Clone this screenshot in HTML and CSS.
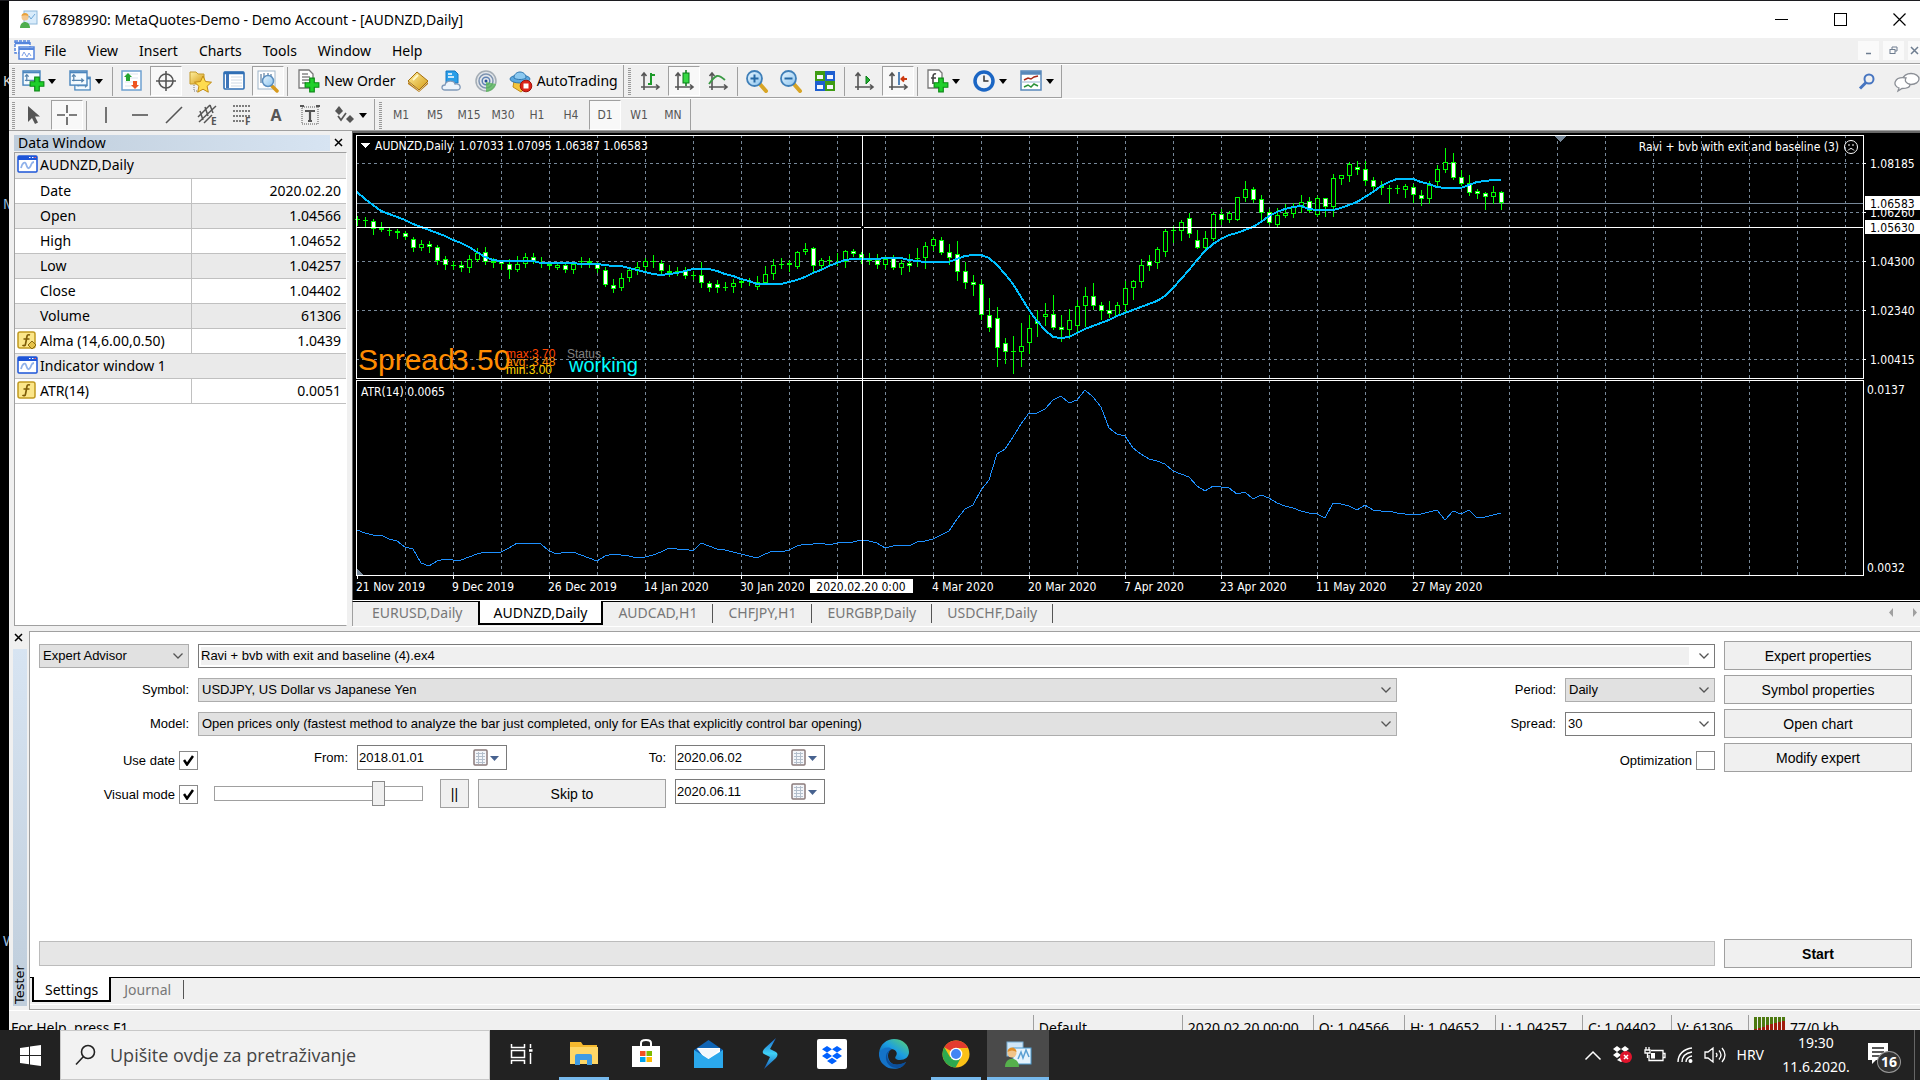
FILE: index.html
```html
<!DOCTYPE html>
<html lang="en">
<head>
<meta charset="utf-8">
<title>67898990: MetaQuotes-Demo - Demo Account - [AUDNZD,Daily]</title>
<link rel="stylesheet" href="styles.css">
</head>
<body>
<svg class="defs" aria-hidden="true">
  <defs>
    <linearGradient id="gold" x1="0" y1="0" x2="1" y2="1"><stop offset="0" stop-color="#fff0a0"/><stop offset="1" stop-color="#d49a12"/></linearGradient>
    <linearGradient id="lens" x1="0" y1="0" x2="1" y2="1"><stop offset="0" stop-color="#e8f6ff"/><stop offset="1" stop-color="#8cc4ee"/></linearGradient>
    <linearGradient id="edge" x1="0" y1="1" x2="1" y2="0"><stop offset="0" stop-color="#0c59a4"/><stop offset=".5" stop-color="#1b9de2"/><stop offset="1" stop-color="#5fd66b"/></linearGradient>
    <linearGradient id="bolt" x1="0" y1="1" x2="0" y2="0"><stop offset="0" stop-color="#1457b8"/><stop offset=".5" stop-color="#3fd0f5"/><stop offset="1" stop-color="#1a6ad0"/></linearGradient>
    <symbol id="plus" viewBox="0 0 14 14"><path d="M5 1h4v4h4v4H9v4H5V9H1V5h4z" fill="#1fd02a" stroke="#0a8a14"/></symbol>
    <symbol id="chartwin" viewBox="0 0 20 18"><rect x="1" y="1" width="18" height="15" fill="#f4fbff" stroke="#4a86bd" stroke-width="1.500"/><path d="M1 2.500h18" stroke="#4a86bd" stroke-width="2"/><path d="M5 5v7M3 7l2-2 2 2M3 11h13M13 9l2 2-2 2" fill="none" stroke="#5684ad" stroke-width="1.300"/></symbol>
    <symbol id="axes" viewBox="0 0 24 24"><path d="M6 4v17M3 18h18M3.500 7L6 4l2.500 3M18 15.500l3 2.500-3 2.500" fill="none" stroke="#555" stroke-width="1.600"/></symbol>
    <symbol id="datawin" viewBox="0 0 21 18"><rect x="1" y="1" width="19" height="16" rx="1" fill="#fff" stroke="#1d55d8" stroke-width="1.500"/><path d="M1 3h19" stroke="#1d55d8" stroke-width="4"/><path d="M12 2.500h1.500M15 2.500h1.500" stroke="#fff"/><path d="M17.500 2.500H19" stroke="#f55"/><path d="M4 13c1-5 4-7 5-4s2 6 4 3 1-5 4-5" fill="none" stroke="#8fb1ea" stroke-width="1.800"/></symbol>
    <symbol id="func" viewBox="0 0 20 19"><rect x="1" y="1" width="17" height="16" rx="2" fill="#fbe68a" stroke="#c19a21" stroke-width="1.500"/><path d="M13 4c-3-1-3 1-3.500 4L8.500 13c0 2-2 2-3 1M6.500 8h6" fill="none" stroke="#7d5c08" stroke-width="1.700"/></symbol>
    <symbol id="cal" viewBox="0 0 28 20"><rect x="1" y="2" width="13" height="15" rx="1" fill="#f4f6fa" stroke="#8a7b7b" stroke-width="1.500"/><path d="M3 5.500h9M3 8.500h9M3 11.500h9M3 14.500h9M5.500 4v12M9.500 4v12" stroke="#b4bfcc"/><path d="M17 8h9l-4.500 5z" fill="#47628f"/></symbol>
    <symbol id="chev" viewBox="0 0 12 8"><path d="M1.500 1.500L6 6l4.500-4.500" fill="none" stroke="#555" stroke-width="1.300"/></symbol>
  </defs>
</svg>

<div class="screen">
  <span class="desk-text dt-1">K</span>
  <span class="desk-text dt-2">M</span>
  <span class="desk-text dt-3">W</span>

  <main class="app">
    <header class="titlebar">
      <svg width="20" height="20" viewBox="0 0 20 20"><rect x="5" y="1" width="13" height="13" fill="#d9ecfb" stroke="#8db8da"/><path d="M7 10l3-4 2 3 4-5" fill="none" stroke="#6fa8d8"/><circle cx="6" cy="7" r="3.500" fill="#f3c78d"/><path d="M2.500 6c0-4 7-4 7 0-2-1-5-1-7 0z" fill="#e8a13b"/><path d="M1 18c0-8 10-8 10 0z" fill="#4eae4e"/></svg>
      <h1>67898990: MetaQuotes-Demo - Demo Account - [AUDNZD,Daily]</h1>
      <div class="win-buttons">
        <button aria-label="Minimize"><svg width="13" height="13"><path d="M0 6.500h13" stroke="#000"/></svg></button>
        <button aria-label="Maximize"><svg width="13" height="13"><rect x=".5" y=".5" width="12" height="12" fill="none" stroke="#000"/></svg></button>
        <button aria-label="Close"><svg width="13" height="13"><path d="M.5.500l12 12M12.500.500l-12 12" stroke="#000" stroke-width="1.200"/></svg></button>
      </div>
    </header>

    <nav class="menubar">
      <svg width="21" height="21" viewBox="0 0 21 21"><rect x="1" y="1" width="15" height="12" fill="#fff" stroke="#5585dd" stroke-width="1.500" stroke-dasharray="3 1"/><path d="M1 3h15" stroke="#5585dd" stroke-width="2.500"/><rect x="5" y="7" width="15" height="12" fill="#fff" stroke="#5585dd" stroke-width="1.500"/><path d="M5 9h15" stroke="#5585dd" stroke-width="2"/><path d="M8 16l2-4 3 5 2-4 2 3" fill="none" stroke="#7fa2e6"/></svg>
      <a href="#">File</a><a href="#">View</a><a href="#">Insert</a><a href="#">Charts</a><a href="#">Tools</a><a href="#">Window</a><a href="#">Help</a>
      <div class="mdi-buttons">
        <button aria-label="Minimize chart"><svg width="9" height="9"><path d="M2 7.500h5" stroke="#6e7d90" stroke-width="1.500"/></svg></button>
        <button aria-label="Restore chart"><svg width="9" height="9"><path d="M3 3V1h5v4H6" fill="none" stroke="#6e7d90"/><rect x="1" y="3.500" width="5" height="4" fill="none" stroke="#6e7d90"/></svg></button>
        <button aria-label="Close chart"><svg width="9" height="9"><path d="M1 1l7 7M8 1L1 8" stroke="#6e7d90" stroke-width="1.500"/></svg></button>
      </div>
    </nav>

    <div class="toolbar">
      <div class="tool-group">
        <i class="grip"></i>
        <button class="tb drop" aria-label="New chart"><svg width="24" height="24"><use href="#chartwin" x="1" y="1" width="19" height="17"/><use href="#plus" x="8" y="7" width="16" height="16"/></svg><i class="caret"></i></button>
        <button class="tb drop" aria-label="Profiles"><svg width="24" height="24"><use href="#chartwin" x="6" y="7" width="17" height="16"/><use href="#chartwin" x="1" y="1" width="19" height="17"/></svg><i class="caret"></i></button>
        <i class="sep"></i>
        <button class="tb" aria-label="Market Watch"><svg width="24" height="24"><rect x="2" y="2" width="19" height="19" fill="#fff" stroke="#6ea0d0" stroke-width="1.500"/><path d="M5 5h13M5 9h13M5 13h13M5 17h13" stroke="#dbe5ee"/><path d="M8 4l4 4h-2v4H6V8H4z" fill="#23a52e"/><path d="M15 20l4-4h-2v-4h-4v4h-2z" fill="#ee5420"/></svg></button>
        <button class="tb on" aria-label="Navigator target"><svg width="24" height="24" fill="none" stroke="#555" stroke-width="1.600"><circle cx="12" cy="12" r="7"/><path d="M12 2v20M2 12h20"/></svg></button>
        <button class="tb" aria-label="Navigator"><svg width="24" height="24"><path d="M2 3h6l2 2h6v10H2z" fill="url(#gold)" stroke="#c49a2c"/><path d="M6 16v6h5" stroke="#777" stroke-dasharray="1 1" fill="none"/><path d="M15 7l2.500 5.500 6 .7-4.400 4 1.200 6L15 20.200 9.700 23.200l1.200-6-4.400-4 6-.7z" fill="#ffdc4e" stroke="#c08a14"/></svg></button>
        <button class="tb" aria-label="Terminal"><svg width="24" height="24"><rect x="2" y="3" width="20" height="17" rx="1" fill="#fff" stroke="#2f6fb5" stroke-width="1.600"/><path d="M2 4h20" stroke="#2f6fb5" stroke-width="2.500"/><path d="M4 5h3v14H4z" fill="#3d74b8"/><path d="M9 8h11M9 11h11M9 14h11M9 17h11" stroke="#cfd9e4"/></svg></button>
        <button class="tb on" aria-label="Strategy Tester"><svg width="24" height="24"><rect x="2" y="2" width="17" height="18" fill="#fff" stroke="#9db4c8"/><path d="M5 5v9M8 4v10M12 4v10M15 5v9" stroke="#7c98b4" stroke-width="1.500"/><path d="M16 17l5 5" stroke="#d79a1e" stroke-width="3.500" stroke-linecap="round"/><circle cx="12" cy="12" r="5.500" fill="url(#lens)" stroke="#5b8fc0" stroke-width="1.500"/></svg></button>
        <i class="sep"></i>
        <button class="tb wide"><svg width="24" height="24"><path d="M3 1h10l4 4v14H3z" fill="#fff" stroke="#777" stroke-width="1.300"/><path d="M6 5h6M6 8h8M6 11h8M6 14h4" stroke="#888" stroke-width="1.500"/><use href="#plus" x="8" y="8" width="16" height="16"/></svg>New Order</button>
        <button class="tb" aria-label="MetaEditor"><svg width="24" height="24"><path d="M2 12L11 3l11 9-9 9z" fill="url(#gold)" stroke="#a56f0c"/><path d="M2 13l11 9 9-9v2l-9 8L2 15z" fill="#b97d12"/><path d="M7 11l5-5" stroke="#fff7c8" stroke-width="2"/></svg></button>
        <button class="tb" aria-label="Cloud"><svg width="24" height="24"><path d="M6 2h9l3 3v9H6z" fill="#2a9ee8" stroke="#1579c4"/><path d="M8 5h4M8 8h6" stroke="#fff" stroke-width="1.500"/><path d="M5 21c-4 0-4-5 0-5 1-5 9-5 10-1 6-1 7 6 2 6z" fill="#eef4fb" stroke="#8099b8" stroke-width="1.300"/></svg></button>
        <button class="tb" aria-label="Signals"><svg width="24" height="24" fill="none"><circle cx="12" cy="12" r="10" fill="#e3e6ea" stroke="#a4adb5" stroke-width="1.500"/><circle cx="12" cy="12" r="7" stroke="#7d93b0" stroke-width="1.500"/><circle cx="12" cy="12" r="3.800" stroke="#5e82b4" stroke-width="1.500"/><circle cx="12" cy="12" r="1.500" fill="#234f96"/><path d="M12 13v10c5 0 9-4 10-8z" fill="#59b559" opacity=".8"/></svg></button>
        <button class="tb wide"><svg width="24" height="24"><path d="M5 12l-1 6 8 5 6-5V12z" fill="#f4c53c" stroke="#c48b16"/><ellipse cx="11" cy="10" rx="10" ry="4" fill="#5ba8df" stroke="#2f77b0"/><path d="M5 9c0-8 12-8 12 0-3 2-9 2-12 0z" fill="#8cc9f0" stroke="#2f77b0"/><circle cx="17" cy="17" r="5.800" fill="#dc2318" stroke="#a01008"/><rect x="14.500" y="14.500" width="5" height="5" fill="#fff"/></svg>AutoTrading</button>
      </div>
      <div class="tool-group">
        <i class="grip"></i>
        <button class="tb" aria-label="Bar chart"><svg width="24" height="24"><use href="#axes"/><path d="M13 4v12M13 6h4M10 15h3" stroke="#1c9a2a" stroke-width="2"/></svg></button>
        <button class="tb on" aria-label="Candlesticks"><svg width="24" height="24"><use href="#axes"/><path d="M14 1v16" stroke="#087a18" stroke-width="1.500"/><rect x="11" y="4" width="6" height="10" fill="#35d943" stroke="#087a18"/></svg></button>
        <button class="tb" aria-label="Line chart"><svg width="24" height="24"><use href="#axes"/><path d="M3 15c7-10 9-10 16-4" fill="none" stroke="#3a9a44" stroke-width="1.800"/></svg></button>
        <i class="sep"></i>
        <button class="tb" aria-label="Zoom in"><svg width="24" height="24"><path d="M14 14l7 8" stroke="#d8a526" stroke-width="4" stroke-linecap="round"/><circle cx="9.500" cy="9.500" r="7.500" fill="url(#lens)" stroke="#3f7fb8" stroke-width="1.800"/><path d="M5.500 9.500h8M9.500 5.500v8" stroke="#2669a5" stroke-width="2"/></svg></button>
        <button class="tb" aria-label="Zoom out"><svg width="24" height="24"><path d="M14 14l7 8" stroke="#d8a526" stroke-width="4" stroke-linecap="round"/><circle cx="9.500" cy="9.500" r="7.500" fill="url(#lens)" stroke="#3f7fb8" stroke-width="1.800"/><path d="M5.500 9.500h8" stroke="#2669a5" stroke-width="2"/></svg></button>
        <button class="tb" aria-label="Tile windows"><svg width="24" height="24"><path d="M2 2h10v10H2zM12 12h10v10H12z" fill="#3f9c14"/><path d="M12 2h10v10H12zM2 12h10v10H2z" fill="#1f5fd0"/><path d="M4 6h6v4H4zM14 6h6v4h-6zM4 16h6v4H4zM14 16h6v4h-6z" fill="#f4f8ff"/></svg></button>
        <i class="sep"></i>
        <button class="tb" aria-label="Auto scroll"><svg width="24" height="24"><use href="#axes"/><path d="M14 7l4 4-4 4z" fill="#22b030" stroke="#0b7d18"/></svg></button>
        <button class="tb on" aria-label="Chart shift"><svg width="24" height="24"><use href="#axes"/><path d="M13 3v13" stroke="#2c68a8" stroke-width="1.600"/><path d="M15 10h6M18 7.500L15.500 10l2.500 2.500" fill="none" stroke="#cc3a10" stroke-width="2"/></svg></button>
        <i class="sep"></i>
        <button class="tb drop" aria-label="Indicators"><svg width="24" height="24"><path d="M3 1h11l3 3v15H3z" fill="#fff" stroke="#777" stroke-width="1.300"/><path d="M11 5c-3-1-3 2-3 4v6M6 9h5" fill="none" stroke="#444" stroke-width="1.600"/><use href="#plus" x="8" y="8" width="16" height="16"/></svg><i class="caret"></i></button>
        <button class="tb drop" aria-label="Periods"><svg width="24" height="24"><circle cx="12" cy="12" r="9" fill="#f2f5f8" stroke="#1b66c4" stroke-width="3.500"/><path d="M12 6.500V12h4.500" fill="none" stroke="#333" stroke-width="1.500"/></svg><i class="caret"></i></button>
        <button class="tb drop" aria-label="Templates"><svg width="24" height="24"><rect x="2" y="2" width="20" height="19" fill="#fff" stroke="#5888ba" stroke-width="1.500"/><path d="M2 4h20" stroke="#5888ba" stroke-width="3.500"/><path d="M2 13h20" stroke="#9ab5d0"/><path d="M5 11l4-2 3 1 3-2 4-1" fill="none" stroke="#a82818" stroke-width="1.500"/><path d="M5 18l4-2 3 2 3-3 4 2" fill="none" stroke="#2b9237" stroke-width="1.500"/></svg><i class="caret"></i></button>
      </div>
      <div class="tool-right">
        <button class="tb" aria-label="Search"><svg width="20" height="20" fill="none" stroke="#4775c0"><circle cx="12" cy="7" r="4.500" stroke-width="2"/><path d="M9 10.500L3 16.500" stroke-width="3"/></svg></button>
        <button class="tb" aria-label="Chat"><svg width="26" height="22" fill="#fff" stroke="#8b8f96" stroke-width="1.300"><ellipse cx="17" cy="8" rx="8" ry="5.500"/><path d="M12 7c-12-2-14 8-7 10l-1 3 4-2.500c5 0 8-1 8-4-3-1-6-3-4-6.500z"/></svg></button>
      </div>
    </div>

    <div class="toolbar second">
      <div class="tool-group">
        <i class="grip"></i>
        <button class="tb" aria-label="Cursor"><svg width="24" height="24"><path d="M7 3v16l4-4 3 6 3-1.500-3-6h5z" fill="#555"/></svg></button>
        <button class="tb on" aria-label="Crosshair"><svg width="24" height="24" stroke="#555" stroke-width="1.600"><path d="M12 2v8M12 14v8M2 12h8M14 12h8"/></svg></button>
        <i class="sep"></i>
        <button class="tb" aria-label="Vertical line"><svg width="24" height="24" stroke="#555" stroke-width="1.600"><path d="M12 4v16"/></svg></button>
        <button class="tb" aria-label="Horizontal line"><svg width="24" height="24" stroke="#555" stroke-width="1.600"><path d="M4 12h16"/></svg></button>
        <button class="tb" aria-label="Trendline"><svg width="24" height="24" stroke="#555" stroke-width="1.600"><path d="M4 20L20 4"/></svg></button>
        <button class="tb glyph" aria-label="Channel"><svg width="24" height="24" stroke="#555" stroke-width="1.500" fill="none"><path d="M2 14L14 2M3 19L20 3M8 20l8-8M4 8l3 9M9 4l3 9M14 2l3 8"/><text x="15" y="22" class="tiny">E</text></svg></button>
        <button class="tb glyph" aria-label="Fibonacci"><svg width="24" height="24" stroke="#555" stroke-width="1.500" stroke-dasharray="2 1" fill="none"><path d="M3 3h17M3 8h17M3 13h17M3 18h11"/><text x="15" y="22" class="tiny">F</text></svg></button>
        <button class="tb glyph">A</button>
        <button class="tb" aria-label="Text label"><svg width="24" height="24"><rect x="4" y="4" width="16" height="17" fill="none" stroke="#555" stroke-dasharray="1 1"/><path d="M2 3h4M18 3h4" stroke="#555" stroke-width="2"/><path d="M7 8h10M12 8v10M10 18h4" stroke="#555" stroke-width="2.200"/></svg></button>
        <button class="tb drop" aria-label="Arrows"><svg width="24" height="24"><path d="M7 3l4 5-4 4-4-4z" fill="#555"/><path d="M18 12l4 4-4 4-4-4z" fill="#555"/><path d="M6 13l3 4 5-7" fill="none" stroke="#555" stroke-width="1.700"/></svg><i class="caret"></i></button>
      </div>
      <div class="tool-group frames">
        <i class="grip"></i>
        <button class="tb">M1</button><button class="tb">M5</button><button class="tb">M15</button><button class="tb">M30</button><button class="tb">H1</button><button class="tb">H4</button><button class="tb on">D1</button><button class="tb">W1</button><button class="tb">MN</button>
      </div>
    </div>

    <div class="workspace">
      <aside class="data-window">
        <div class="dw-head"><h2>Data Window</h2><button aria-label="Close Data Window"><svg width="9" height="9"><path d="M1 1l7 7M8 1L1 8" stroke="#000" stroke-width="1.500"/></svg></button></div>
        <div class="dw-body">
          <table>
            <colgroup><col class="col-name"><col></colgroup>
            <tr class="head"><th colspan="2"><svg width="21" height="18"><use href="#datawin"/></svg>AUDNZD,Daily</th></tr>
            <tr><th>Date</th><td>2020.02.20</td></tr>
            <tr class="alt"><th>Open</th><td>1.04566</td></tr>
            <tr><th>High</th><td>1.04652</td></tr>
            <tr class="alt"><th>Low</th><td>1.04257</td></tr>
            <tr><th>Close</th><td>1.04402</td></tr>
            <tr class="alt"><th>Volume</th><td>61306</td></tr>
            <tr><th><svg width="21" height="19"><use href="#func" width="20" height="19"/><path d="M15 10l4 4-4 4-4-4z" fill="#e6c34a" stroke="#8d6c10"/></svg>Alma (14,6.00,0.50)</th><td>1.0439</td></tr>
            <tr class="head"><th colspan="2"><svg width="21" height="18"><use href="#datawin"/></svg>Indicator window 1</th></tr>
            <tr><th><svg width="21" height="19"><use href="#func" width="20" height="19"/></svg>ATR(14)</th><td>0.0051</td></tr>
          </table>
        </div>
      </aside>
      <section class="charts">
        <div class="chart" id="chart"></div>
        <nav class="tabs chart-tabs">
          <a href="#">EURUSD,Daily</a><a href="#" class="current">AUDNZD,Daily</a><a href="#">AUDCAD,H1</a><a href="#">CHFJPY,H1</a><a href="#">EURGBP,Daily</a><a href="#">USDCHF,Daily</a>
          <span class="tab-scroll"><svg width="32" height="10"><path d="M5 0v9L1 4.500zM25 0v9l4-4.500z" fill="#a0a0a0"/></svg></span>
        </nav>
      </section>
    </div>

    <section class="tester">
      <div class="tester-side">
        <button aria-label="Close Tester"><svg width="9" height="9"><path d="M1 1l7 7M8 1L1 8" stroke="#000" stroke-width="1.500"/></svg></button>
        <h2>Tester</h2>
      </div>
      <div class="tester-main">
        <form class="settings">
          <div class="fields">
            <div class="row">
              <select class="w150" aria-label="Program type"><option>Expert Advisor</option></select>
              <div class="combo grow shaded"><input type="text" aria-label="Expert" value="Ravi + bvb with exit and baseline (4).ex4"><button type="button" aria-label="Choose expert"><svg width="12" height="8"><use href="#chev"/></svg></button></div>
            </div>
            <div class="row">
              <label class="w150" for="symbol">Symbol:</label>
              <select class="grow" id="symbol"><option>USDJPY, US Dollar vs Japanese Yen</option></select>
              <label class="w150" for="period">Period:</label>
              <select class="w150" id="period"><option>Daily</option></select>
            </div>
            <div class="row">
              <label class="w150" for="model">Model:</label>
              <select class="grow" id="model"><option>Open prices only (fastest method to analyze the bar just completed, only for EAs that explicitly control bar opening)</option></select>
              <label class="w150" for="spread">Spread:</label>
              <div class="combo w150"><input type="text" id="spread" value="30"><button type="button" aria-label="Choose spread"><svg width="12" height="8"><use href="#chev"/></svg></button></div>
            </div>
            <div class="row">
              <label class="check w159">Use date<input type="checkbox" checked></label>
              <label class="w141" for="from">From:</label>
              <div class="date"><input type="text" id="from" value="2018.01.01"><button type="button" aria-label="Open calendar"><svg width="28" height="20"><use href="#cal"/></svg></button></div>
              <label class="w150" for="to">To:</label>
              <div class="date"><input type="text" id="to" value="2020.06.02"><button type="button" aria-label="Open calendar"><svg width="28" height="20"><use href="#cal"/></svg></button></div>
              <label class="check push">Optimization<input type="checkbox"></label>
            </div>
            <div class="row">
              <label class="check w159">Visual mode<input type="checkbox" checked></label>
              <input type="range" class="speed" aria-label="Speed" min="0" max="100" value="81">
              <button type="button" class="btn pause">||</button>
              <button type="button" class="btn">Skip to</button>
              <div class="date"><input type="text" aria-label="Skip to date" value="2020.06.11"><button type="button" aria-label="Open calendar"><svg width="28" height="20"><use href="#cal"/></svg></button></div>
            </div>
          </div>
          <div class="actions">
            <button type="button" class="btn">Expert properties</button>
            <button type="button" class="btn">Symbol properties</button>
            <button type="button" class="btn">Open chart</button>
            <button type="button" class="btn">Modify expert</button>
          </div>
        </form>
        <div class="run">
          <div class="progress" role="progressbar" aria-valuenow="0" aria-label="Test progress"></div>
          <button type="button" class="btn start">Start</button>
        </div>
        <nav class="tabs tester-tabs"><a href="#" class="current">Settings</a><a href="#">Journal</a></nav>
      </div>
    </section>

    <footer class="status">
      <span class="grow">For Help, press F1</span>
      <span class="s-profile">Default</span>
      <span class="s-time">2020.02.20 00:00</span>
      <span class="s-val">O: 1.04566</span>
      <span class="s-val">H: 1.04652</span>
      <span class="s-val">L: 1.04257</span>
      <span class="s-val">C: 1.04402</span>
      <span class="s-val">V: 61306</span>
      <span class="s-net"><svg width="31" height="20"><path d="M1.500 0v20M5.500 0v20M9.500 0v20M13.500 0v20M17.500 0v20M21.500 0v20M25.500 0v20M29.500 0v20" stroke="#4d7a10" stroke-width="3"/><path d="M1.500 12v8M5.500 11v9M9.500 10v10M13.500 8v12M17.500 7v13M21.500 6v14M25.500 5v15M29.500 4v16" stroke="#a01c0c" stroke-width="3"/></svg>77/0 kb</span>
    </footer>
  </main>

  <footer class="taskbar">
    <button class="start-btn" aria-label="Start"><svg width="21" height="21" fill="#fff"><path d="M0 3l9-1.200V10H0zM10 1.600L21 0v10H10zM0 11h9v8.200L0 18zM10 11h11v10l-11-1.600z"/></svg></button>
    <label class="search"><svg width="22" height="22" fill="none" stroke="#222" stroke-width="1.600"><circle cx="13" cy="8" r="6.500"/><path d="M8.500 12.500L1 20.500"/></svg><input type="text" aria-label="Search" placeholder="Upišite ovdje za pretraživanje"></label>
    <div class="apps">
      <button aria-label="Task View"><svg width="24" height="22" fill="none" stroke="#fff" stroke-width="1.500"><path d="M1.500 1v3.500h13V1M1.500 21v-3.500h13V21M20.500 1v4M20.500 10v11"/><rect x="1.500" y="7.500" width="13" height="7"/><path d="M19 7.500h3.500" stroke-width="2.500"/></svg></button>
      <button class="open" aria-label="File Explorer"><svg width="30" height="30"><path d="M1 3h11l2 3h14v18H1z" fill="#f5b82e"/><path d="M1 8h28v17H1z" fill="#ffd766"/><path d="M6 26V17q0-2 2-2h13q2 0 2 2v9h-5v-5h-7v5z" fill="#3f9be3"/></svg></button>
      <button aria-label="Store"><svg width="30" height="32"><path d="M10 8V5q0-3 5-3t5 3v3" fill="none" stroke="#fff" stroke-width="2"/><path d="M1 8h28v21H1z" fill="#fff"/><path d="M9 13h5.500v5H9z" fill="#f25022"/><path d="M15.500 13H21v5h-5.500z" fill="#7fba00"/><path d="M9 19h5.500v5H9z" fill="#00a4ef"/><path d="M15.500 19H21v5h-5.500z" fill="#ffb900"/></svg></button>
      <button aria-label="Mail"><svg width="31" height="30"><path d="M1 11L15.500 1 30 11v6H1z" fill="#0f64b4"/><path d="M4 9h23v9l-11 8z" fill="#fff"/><path d="M1 11l14.500 9L30 11v18H1z" fill="#2ba8ec"/><path d="M4 10h23L15.500 20z" fill="#f3f8fc"/></svg></button>
      <button aria-label="Bolt"><svg width="24" height="32"><path d="M18 0L7 10Q3 14 6 16L12 19 6 31 18 20Q21 16 18 14L12 11z" fill="url(#bolt)"/></svg></button>
      <button aria-label="Dropbox"><svg width="30" height="30"><rect width="30" height="30" rx="2" fill="#fff"/><path d="M10 7l5 3.300-5 3.300-5-3.300zM20 7l5 3.300-5 3.300-5-3.300zM10 13.600l5 3.300-5 3.300-5-3.300zM20 13.600l5 3.300-5 3.300-5-3.300zM15 18.700l5 3.300-5 3.300-5-3.300z" fill="#0061fe"/></svg></button>
      <button aria-label="Edge"><svg width="32" height="32"><path d="M1 15C2 6 9 1 16 1c9 0 15 6 15 13 0 5-4 8-9 8-4 0-6-2-4-4 2-3 0-7-5-7-6 0-11 4-12 9z" fill="url(#edge)"/><path d="M1 15c3-5 9-7 13-4-4 2-5 7-3 11 3 6 11 6 17 2C24 32 12 33 6 27c-4-3-5-8-5-12z" fill="#1473c8"/><path d="M14 11c-5 2-6 8-3 12 4 5 11 4 17 1-4 8-13 7-17 3-5-5-4-14 3-16z" fill="#0b4f9c"/></svg></button>
      <button class="open" aria-label="Chrome"><svg width="28" height="28"><circle cx="14" cy="14" r="13.500" fill="#fbc116"/><path d="M14 14L2.300 7.300A13.500 13.500 0 0 1 25.700 7.300L26 8H14z" fill="#e33b2e"/><path d="M2.300 7.200A13.500 13.500 0 0 0 13.600 27.500L19 17.500 8 17z" fill="#2da94f"/><circle cx="14" cy="14" r="6.300" fill="#fff"/><circle cx="14" cy="14" r="5" fill="#4285f4"/></svg></button>
      <button class="open active" aria-label="MetaTrader"><svg width="28" height="28"><rect x="3" y="2" width="16" height="14" fill="#cfe6f7" stroke="#79add4"/><rect x="9" y="8" width="18" height="16" fill="#e6f3fc" stroke="#4d9bd0"/><path d="M14 19l3-7 2 6 3-8 3 7" fill="none" stroke="#5b9fd2" stroke-width="1.500"/><circle cx="8" cy="13" r="4.500" fill="#f1c48a"/><path d="M3.500 12c0-6 9-6 9 0-3-2-6-2-9 0z" fill="#e08f28"/><path d="M1 27c0-11 14-11 14 0z" fill="#56b04c"/></svg></button>
    </div>
    <div class="tray">
      <button aria-label="Show hidden icons"><svg width="18" height="11" fill="none" stroke="#fff" stroke-width="1.500"><path d="M1.500 9.500L9 2l7.500 7.500"/></svg></button>
      <button aria-label="Dropbox status"><svg width="22" height="20"><path d="M5 1l4 3-4 3-4-3zM13 1l4 3-4 3-4-3zM5 7l4 3-4 3-4-3zM9 12l4 3-4 2-4-2z" fill="#fff"/><circle cx="14" cy="12" r="6" fill="#e0142c"/><path d="M12 10l4 4M16 10l-4 4" stroke="#fff" stroke-width="1.500"/></svg></button>
      <button aria-label="Battery"><svg width="22" height="18" fill="none" stroke="#fff" stroke-width="1.300"><path d="M7 4.500h12v10H5V9M19 7.500h2v4h-2"/><path d="M2 1v3M5 1v3M1 4h5v3H1zM3.500 7v5"/><path d="M7 7h4v5.500H7z" fill="#fff" stroke="none"/></svg></button>
      <button aria-label="Wi-Fi"><svg width="18" height="18" fill="none" stroke="#fff" stroke-width="1.400"><path d="M2 16C2 8 8 3 16 2M6 16c0-6 4-9 10-10M10 16c0-3 2-5 6-6"/><circle cx="14.500" cy="15" r="1.300" fill="#fff"/></svg></button>
      <button aria-label="Volume"><svg width="23" height="20" fill="none" stroke="#fff" stroke-width="1.300"><path d="M1 7h3l5-4v14l-5-4H1zM12 8q2 2 0 4M15 5.500q4 4.500 0 9M18 3q6 7 0 14"/></svg></button>
      <button class="lang">HRV</button>
      <button class="clock"><span>19:30</span><span>11.6.2020.</span></button>
      <button class="note" aria-label="Notifications"><svg width="20" height="22"><path d="M0 0h20v17H8l-4 4v-4H0z" fill="#fff"/><path d="M4 5h12M4 9h12M4 13h8" stroke="#222" stroke-width="1.500"/></svg><b>16</b></button>
    </div>
  </footer>
</div>
<script src="chart.js"></script>
</body>
</html>
```

FILE: styles.css
```css
* { box-sizing: border-box; }

body {
  margin: 0;
  background: #000;
  color: #000;
  font: 14px/20px "Noto Sans", "Open Sans", sans-serif;
}

button, input, select { font: inherit; color: inherit; }
button { border: 0; background: none; padding: 0; }
a { color: inherit; text-decoration: none; }
h1, h2 { margin: 0; font-size: inherit; font-weight: 400; }
svg { display: block; flex: none; }
.defs { position: absolute; width: 0; height: 0; }
.grow { flex: 1; min-width: 0; }

.screen {
  position: relative;
  display: flex;
  flex-direction: column;
  height: 100vh;
  min-height: 900px;
  overflow: hidden;
  border-top: 1px solid #1c1c20;
}
.desk-text { position: absolute; left: 3px; color: #9fc0e0; }
.dt-1 { top: 70px; color: #ddd; }
.dt-2 { top: 193px; }
.dt-3 { top: 930px; }

/* Terminal window */
.app {
  position: relative;
  flex: 1;
  min-height: 0;
  margin-left: 9px;
  display: flex;
  flex-direction: column;
  background: #f0f0f0;
  overflow: hidden;
}

.titlebar {
  flex: none;
  display: flex;
  align-items: center;
  gap: 4px;
  height: 37px;
  padding-left: 10px;
  background: #fff;
}
.titlebar h1 { flex: 1; }
.win-buttons { display: flex; }
.win-buttons button { width: 59px; height: 36px; display: grid; place-items: center; }
.win-buttons button:last-child { width: 42px; margin-left: 8px; }

.menubar {
  flex: none;
  display: flex;
  align-items: center;
  gap: 21px;
  height: 26px;
  padding-left: 5px;
  border-bottom: 1px solid #a0a0a0;
}
.menubar > svg { margin-right: -12px; }
.mdi-buttons { margin-left: auto; display: flex; gap: 4px; }
.mdi-buttons button { width: 21px; height: 19px; background: #fafafa; display: grid; place-items: center; }
.mdi-buttons button:last-child { width: 12px; }

.toolbar {
  flex: none;
  display: flex;
  height: 34px;
  border-top: 1px solid #fff;
}
.tool-group {
  display: flex;
  align-items: center;
  height: 33px;
  border-right: 1px solid #a0a0a0;
  border-bottom: 1px solid #a0a0a0;
}
.toolbar:not(.second) .tool-group:last-of-type { padding-right: 4px; }
.second .tool-group { border-bottom: 0; height: 31px; padding-top: 1px; }
.second { height: 33px; border-bottom: 1px solid #a0a0a0; }
.grip {
  width: 3px;
  height: 27px;
  margin: 0 1px 0 3px;
  background: repeating-linear-gradient(#9a9a9a 0 1px, #f0f0f0 1px 2px);
}
.tool-group + .tool-group .grip { margin: 0 2px 0 4px; }
.sep { width: 1px; height: 29px; margin: 0 2px; background: #a0a0a0; }
.tb {
  width: 34px;
  height: 30px;
  display: flex;
  align-items: center;
  justify-content: center;
}
.tb.drop { width: 47px; gap: 3px; padding-right: 2px; }
.tb.wide { width: auto; padding: 0 5px 0 6px; gap: 4px; }
.tb.on {
  width: 32px;
  margin: 0 1px;
  background: #f8f8f8;
  border: 1px solid #fff;
  border-top-color: #a0a0a0;
  border-left-color: #a0a0a0;
}
.caret { border: 4px solid transparent; border-top: 5px solid #000; border-bottom: 0; }
.glyph { color: #555; font-size: 16px; font-weight: 700; }
.glyph svg { overflow: visible; }
.tiny { font-size: 10px; font-weight: 700; fill: #555; stroke: none; }
.frames { color: #555; font-size: 12px; font-family: "DejaVu Sans Condensed", "Noto Sans", sans-serif; }
.tool-right { margin-left: auto; display: flex; align-items: center; gap: 10px; }
.tool-right .tb:last-child { width: 26px; }

/* Data window */
.workspace { flex: none; display: flex; height: 495px; }
.data-window {
  width: 343px;
  padding: 2px 5px 0 5px;
  display: flex;
  flex-direction: column;
}
.dw-head { display: flex; align-items: center; height: 19px; }
.dw-head h2 {
  flex: 1;
  height: 16px;
  padding-left: 4px;
  line-height: 16px;
  background: linear-gradient(90deg, #bfcddb, #d7e4f2);
}
.dw-head button { width: 17px; display: grid; place-items: center; }
.dw-body {
  flex: 1;
  background: #fff;
  border: 1px solid #a0a0a0;
  border-right-color: #fff;
}
table { width: 100%; border-collapse: collapse; table-layout: fixed; }
.col-name { width: 176px; }
th, td {
  height: 25px;
  padding: 0 5px 0 25px;
  font-weight: 400;
  text-align: left;
  line-height: 24px;
  border-bottom: 1px solid #c0c0c0;
  white-space: nowrap;
}
th svg { float: left; margin: 2px 2px 0 -23px; }
td { text-align: right; border-left: 1px solid #c0c0c0; }
.head, .alt { background: #eaeaea; }

/* Charts */
.charts { flex: 1; min-width: 0; display: flex; flex-direction: column; }
.chart {
  height: 470px;
  border-left: 1px solid #696969;
  border-top: 2px solid #696969;
  border-bottom: 1px solid #fff;
  background: #000;
  overflow: hidden;
}
.chart text { font: 12px "DejaVu Sans Condensed", "Noto Sans", sans-serif; fill: #fff; }
.chart text.big { font: 30px "Liberation Sans", Arial, sans-serif; }
.chart text.mid { font: 20px "Liberation Sans", Arial, sans-serif; }
.chart text.small { font: 12px "Liberation Sans", Arial, sans-serif; }
.chart text.black { fill: #000; }
.chart text.orange { fill: #ff8c00; }
.chart text.red { fill: #ff4500; }
.chart text.gold { fill: #ffd700; }
.chart text.gray { fill: #808080; }
.chart text.aqua { fill: #0ff; }

.tabs { display: flex; color: #777; border-top: 1px solid #000; height: 25px; }
.tabs a { height: 23px; line-height: 22px; padding: 0 16px 0 15px; position: relative; }
.tabs a::after {
  content: "";
  position: absolute;
  right: 0;
  top: 2px;
  height: 19px;
  border-right: 1px solid #555;
}
.tabs a.current {
  color: #000;
  background: #fff;
  border: 2px solid #000;
  border-top: 0;
  margin-top: -1px;
  padding: 1px 14px 0;
  height: 24px;
}
.tabs a.current::after, .chart-tabs a:first-child::after { display: none; }
.chart-tabs { border-left: 1px solid #a0a0a0; box-shadow: 0 1px #fff; }
.chart-tabs a:first-child { padding: 0 15px 0 19px; }
.tab-scroll { margin-left: auto; padding-top: 6px; }

/* Strategy tester */
.tester { flex: 1; min-height: 0; display: flex; }
.tester-side {
  width: 20px;
  padding: 7px 2px 4px 4px;
  display: flex;
  flex-direction: column;
}
.tester-side button { height: 16px; padding-left: 1px; display: grid; place-items: start; }
.tester-side h2 {
  flex: 1;
  writing-mode: vertical-rl;
  transform: rotate(180deg);
  line-height: 14px;
  font-size: 13px;
  font-family: "DejaVu Sans", sans-serif;
  background: linear-gradient(#bfcddb, #d7e4f2);
  padding-top: 2px;
}
.tester-main {
  flex: 1;
  min-width: 0;
  margin-top: 5px;
  display: flex;
  flex-direction: column;
  border-left: 1px solid #a0a0a0;
  border-top: 1px solid #a0a0a0;
  background: #fff;
  font: 13px/20px "Liberation Sans", Arial, sans-serif;
}
.settings { flex: 1; display: flex; gap: 9px; padding: 9px 8px 0 9px; }
.fields { flex: 1; min-width: 0; display: flex; flex-direction: column; gap: 5px; }
.row { display: flex; align-items: center; gap: 9px; height: 29px; }
.row label { text-align: right; }
.w150 { width: 150px; flex: none; }
.w141 { width: 141px; flex: none; }
.w159 { width: 159px; flex: none; }
.push { margin-left: auto; }
select {
  appearance: none;
  height: 24px;
  padding: 0 26px 0 3px;
  border: 1px solid #adadad;
  border-radius: 0;
  background: #e1e1e1 url("data:image/svg+xml,%3Csvg xmlns='http://www.w3.org/2000/svg' width='12' height='8'%3E%3Cpath d='M1.500 1.500L6 6l4.500-4.500' fill='none' stroke='%23555' stroke-width='1.300'/%3E%3C/svg%3E") no-repeat right 4px center;
}
.combo, .date { display: flex; align-items: center; height: 24px; border: 1px solid #7a7a7a; background: #fff; }
.combo { padding: 2px; }
.combo input, .date input { flex: 1; min-width: 0; height: 18px; border: 0; padding: 0; background: none; }
.combo.shaded input { background: #f0f0f0; }
.combo button { width: 23px; display: grid; place-items: center; padding-left: 6px; }
.date { width: 150px; height: 25px; padding: 0 5px 0 1px; flex: none; }
.check { display: flex; align-items: center; justify-content: flex-end; gap: 4px; padding-top: 6px; }
.check input {
  appearance: none;
  width: 19px;
  height: 19px;
  margin: 0;
  border: 1px solid #8a8a8a;
  background: #fff;
}
.check input:checked {
  background: url("data:image/svg+xml,%3Csvg xmlns='http://www.w3.org/2000/svg' width='11' height='11'%3E%3Cpath d='M1 5l3 4.500L10 1' fill='none' stroke='%23000' stroke-width='2.500'/%3E%3C/svg%3E") no-repeat center;
}
.speed {
  appearance: none;
  width: 209px;
  height: 25px;
  margin: 4px 8px 0 7px;
  background: none;
}
.speed::-webkit-slider-runnable-track { height: 15px; border: 1px solid #a0a0a0; background: #fff; }
.speed::-webkit-slider-thumb {
  appearance: none;
  width: 13px;
  height: 25px;
  margin-top: -6px;
  border: 1px solid #8a8a8a;
  background: #f0f0f0;
}
.btn { width: 188px; height: 29px; flex: none; border: 1px solid #a0a0a0; background: #f0f0f0; font-size: 14px; }
.row .btn { margin-top: 4px; }
.btn.pause { width: 29px; }
.start { font-weight: 700; }
.actions { display: flex; flex-direction: column; gap: 5px; }
.run { display: flex; gap: 9px; align-items: center; padding: 0 8px 9px 9px; }
.progress { flex: 1; height: 25px; border: 1px solid #bcbcbc; background: #e6e6e6; }
.tester-tabs {
  flex: none;
  height: 33px;
  border-bottom: 1px solid #a0a0a0;
  background: linear-gradient(#f0f0f0 26px, #fff 26px 27px, #f0f0f0 27px);
  padding-left: 2px;
  font: 14px/20px "Noto Sans", "Open Sans", sans-serif;
}
.tester-tabs a { height: 24px; line-height: 24px; padding: 0 13px; }
.tester-tabs a.current { height: 25px; padding: 1px 11px 0; }

.status {
  flex: none;
  display: flex;
  height: 34px;
  margin-bottom: -14px;
  padding-top: 4px;
  border-top: 1px solid #fff;
}
.status span { display: flex; gap: 5px; height: 28px; line-height: 25px; padding-left: 5px; border-left: 1px solid #a0a0a0; }
.status span:first-child { border: 0; padding-left: 2px; }
.status svg { margin-top: 2px; }
.s-profile { width: 149px; }
.s-time { width: 131px; }
.s-val { padding-right: 15px; }
.s-net { width: 172px; }

/* Windows taskbar */
.taskbar {
  position: relative;
  flex: none;
  display: flex;
  height: 50px;
  background: #222;
  color: #fff;
}
.taskbar button { display: grid; place-items: center; }
.start-btn { width: 60px; }
.search {
  width: 430px;
  display: flex;
  align-items: center;
  gap: 13px;
  padding-left: 14px;
  background: #f2f2f2;
  border: 1px solid #c8c8c8;
}
.search input { flex: 1; border: 0; background: none; font: 18px/24px "Open Sans", "Noto Sans", sans-serif; color: #333; padding: 0; }
.search input::placeholder { color: #444; }
.apps { display: flex; margin-left: 1px; }
.apps button { width: 62px; border-bottom: 3px solid transparent; position: relative; }
.apps .open::after {
  content: "";
  position: absolute;
  left: 6px;
  right: 6px;
  bottom: -3px;
  height: 3px;
  background: #76b9ed;
}
.apps .active { background: #4a4a4a; border-bottom-color: #76b9ed; }
.tray { margin-left: auto; display: flex; align-items: center; gap: 10px; margin-right: 5px; border-right: 1px solid #666; padding-right: 12px; }
.tray .clock { width: 84px; display: flex; flex-direction: column; line-height: 24px; }
.tray .note { position: relative; width: 34px; height: 40px; place-items: start; padding-top: 8px; }
.note b {
  position: absolute;
  left: 9px;
  top: 16px;
  width: 24px;
  height: 22px;
  border: 1px solid #999;
  border-radius: 50%;
  background: #333;
  line-height: 20px;
}
```

FILE: chart.js
```js
// Bars: [high, body top, body bottom, low, type]; type b = up, w = down, d = doji.
// Levels are in thirds of a pixel below the top of the window.
const STEP = 8, FIRST = 4;
const bars = `258,268,272,285,d 262,270,274,291,d 268,274,298,314,w 276,294,301,305,w 293,301,304,315,d 297,304,310,326,w
303,310,322,328,w 322,328,356,365,w 330,343,356,360,b 333,343,352,368,w 345,352,395,402,w 380,388,406,417,w
395,405,408,418,d 395,405,416,423,w 375,388,415,428,b 354,370,392,394,b 351,366,398,404,w 385,394,400,411,b
391,394,404,419,w 387,402,422,446,w 378,403,422,423,b 369,382,402,411,b 369,381,394,399,w 381,398,401,411,d
399,403,410,419,w 400,406,416,419,b 402,405,422,426,w 397,403,422,429,b 381,395,400,411,d 384,394,401,411,w
396,403,418,426,w 411,420,466,468,w 448,466,479,486,w 429,444,476,482,b 418,420,446,453,b 398,412,420,432,b
384,394,412,427,b 375,394,398,411,d 390,400,425,431,w 405,424,429,440,w 411,424,429,435,d 411,422,440,444,w
423,435,438,447,d 396,435,461,471,w 454,460,476,483,w 450,462,476,486,w 456,472,477,480,d 447,459,472,488,b
446,454,461,473,b 444,454,458,466,d 440,457,473,477,b 408,433,459,464,b 387,406,434,447,b 384,404,408,414,d
390,400,407,423,b 363,367,413,416,b 339,358,368,372,b 351,354,410,423,w 384,392,410,417,b 378,391,395,405,d
370,396,400,405,d 360,364,398,411,b 357,363,374,380,w 366,374,386,399,w 369,385,395,402,w 372,391,407,414,w
380,388,407,414,b 375,385,416,419,w 390,400,416,432,b 372,400,410,423,w 354,384,387,408,d 336,348,386,414,b
321,327,350,362,b 321,330,369,372,w 342,366,384,402,w 333,372,426,450,w 396,423,459,474,w 435,456,465,495,w
450,462,557,569,w 504,555,594,603,w 531,564,654,708,w 624,639,666,699,w 618,663,668,729,d 579,648,666,708,b
556,594,641,671,b 540,573,582,618,w 519,552,561,585,b 495,552,594,597,w 555,591,600,633,w 537,570,600,624,b
510,528,588,603,b 471,498,530,588,b 459,498,528,537,w 516,525,543,567,w 513,540,552,561,w 516,525,558,558,b
453,474,525,545,b 450,453,476,507,b 387,405,456,471,b 375,393,408,420,w 351,357,399,414,b 297,303,366,378,b
290,302,305,336,d 270,276,305,330,b 249,264,312,321,w 300,330,354,354,w 303,324,354,360,b 246,252,327,330,b
237,252,270,282,w 243,249,270,276,b 201,201,270,270,b 153,177,204,213,b 171,177,210,216,w 195,207,249,267,w
237,246,279,282,w 234,255,285,291,b 222,249,258,261,b 219,231,252,261,b 195,216,231,246,b 201,213,243,246,w
198,204,255,258,b 204,204,231,258,w 132,144,231,258,b 135,135,147,162,b 96,102,138,153,b 93,111,120,132,w
93,117,153,165,w 141,150,171,183,w 153,168,176,192,w 165,174,177,220,d 165,176,180,189,d 162,168,180,201,b
162,171,195,216,w 180,195,207,225,w 153,165,207,219,b 105,117,156,165,b 54,96,120,126,b 69,96,144,147,w
120,141,162,165,w 135,159,189,195,w 177,183,192,204,w 186,189,201,237,w 168,186,201,219,b 183,186,220,237,w`
  .split(/\s+/).map(s => s.split(","));

const alma = [185,208,226,242,253,262,271,281,290,299,308,319,329,340,352,367,380,389,393,393,393,393,393,398,399,399,399,399,401,402,403,406,408,408,413,420,427,432,435,433,428,422,417,416,417,424,431,438,446,454,462,462,462,461,455,450,440,429,419,408,398,391,387,386,386,386,385,383,384,389,392,396,396,396,396,388,379,376,375,384,405,431,463,502,540,573,601,620,625,622,609,598,587,578,569,559,548,539,532,523,514,497,475,447,421,390,364,343,326,316,308,301,292,276,259,245,236,230,228,236,240,240,240,235,226,216,202,187,168,156,148,146,147,156,162,170,174,174,173,165,157,152,150,150];

const atr = [466,475,481,479,492,497,516,521,564,574,558,553,556,556,545,537,532,532,532,518,505,505,505,508,528,536,532,532,541,550,559,543,537,540,543,549,546,540,530,520,521,523,527,505,514,522,526,530,538,543,548,538,529,532,524,513,508,508,505,511,505,502,501,496,499,504,520,514,511,514,500,499,492,479,468,431,401,390,346,315,238,223,185,147,115,115,101,76,64,85,75,45,67,95,160,177,184,220,236,253,257,268,287,296,305,334,348,334,337,340,356,352,373,360,370,384,392,400,408,415,416,430,385,388,393,405,391,405,409,409,414,418,418,418,412,406,436,409,418,406,430,425,420,415];

const dates = ["21 Nov 2019", "9 Dec 2019", "26 Dec 2019", "14 Jan 2020", "30 Jan 2020", "", "4 Mar 2020", "20 Mar 2020", "7 Apr 2020", "23 Apr 2020", "11 May 2020", "27 May 2020"];
const prices = [[30, "1.08185"], [79, "1.06260"], [128, "1.04300"], [177, "1.02340"], [226, "1.00415"]];

const H = 466, TOP = 2, MID = 245, ATR_TOP = 247, BOTTOM = 442, LEFT = 3;
const BID = 70, CROSS_Y = 94, CROSS_X = 509;

const hLine = (x1, x2, y, c, extra = "") => `<path d="M${x1} ${y}.5H${x2}" stroke="${c}" ${extra}/>`;
const vLine = (x, y1, y2, c, extra = "") => `<path d="M${x}.5 ${y1}V${y2}" stroke="${c}" ${extra}/>`;
const text = (x, y, s, cls = "", extra = "") => `<text x="${x}" y="${y}" class="${cls}" ${extra}>${s}</text>`;

function draw() {
  const box = document.getElementById("chart");
  const W = box.clientWidth, right = W - 57;
  const grid = "#778899", dash = 'stroke-dasharray="3 3"';
  let s = "";

  for (let x = FIRST + 48; x < right; x += 48) {
    s += vLine(x, TOP, MID, grid, dash) + vLine(x, ATR_TOP, BOTTOM, grid, dash);
  }
  for (const [y] of prices) s += hLine(LEFT, right, y, grid, dash) + hLine(right, right + 3, y, "#fff");
  s += hLine(LEFT, right, BID, grid);

  bars.forEach(([h, t, b, l, type], i) => {
    const x = FIRST + STEP * i;
    const [yh, yt, yb, yl] = [h, t, b, l].map(v => Math.floor(v / 3) - 3);
    s += vLine(x, yh, yl + 1, "#0f0");
    if (type === "d") s += hLine(x - 2, x + 3, yt, "#0f0");
    else s += `<rect x="${x - 2}.5" y="${yt}.5" width="4" height="${Math.max(1, yb - yt - 1)}" fill="${type === "w" ? "#fff" : "#000"}" stroke="#0f0"/>`;
  });

  const line = (data, offset) => data.map((v, i) => `${FIRST + STEP * i},${Math.round(v / 3) + offset}`).join(" ");
  s += `<polyline points="${line(alma, -3)}" fill="none" stroke="#00bfff" stroke-width="2"/>`;
  s += `<polyline points="${line(atr, 242)}" fill="none" stroke="#1e90ff"/>`;

  s += `<path d="M${right - 309} ${TOP + 1}h12l-6 6z" fill="${grid}"/>`;
  s += `<path d="M${LEFT + 1} ${BOTTOM - 7}v7h6z" fill="${grid}"/>`;

  s += hLine(LEFT, right, CROSS_Y, "#fff") + vLine(CROSS_X, TOP, BOTTOM, "#fff");
  s += `<rect x="${CROSS_X - 1}" y="${CROSS_Y - 1}" width="3" height="3" fill="#000"/>`;
  s += `<rect x="${LEFT}.5" y="${TOP}.5" width="${right - LEFT}" height="${MID - TOP}" fill="none" stroke="#fff"/>`;
  s += `<rect x="${LEFT}.5" y="${ATR_TOP}.5" width="${right - LEFT}" height="${BOTTOM - ATR_TOP}" fill="none" stroke="#fff"/>`;

  for (const [y, p] of prices) s += text(right + 7, y + 5, p);
  for (const [y, p] of [[BID, "1.06583"], [CROSS_Y, "1.05630"]]) {
    s += `<rect x="${right + 2}" y="${y - 7}" width="55" height="14" fill="#fff"/>` + text(right + 7, y + 5, p, "black");
  }
  s += text(right + 4, ATR_TOP + 14, "0.0137") + text(right + 4, BOTTOM - 3, "0.0032");

  dates.forEach((d, i) => {
    const x = FIRST + 96 * i;
    s += vLine(x, BOTTOM, BOTTOM + 4, "#fff") + text(x - 1, BOTTOM + 16, d);
  });
  s += `<rect x="457" y="446" width="103" height="14" fill="#fff"/>` + text(508, BOTTOM + 16, "2020.02.20 0:00", "black", 'text-anchor="middle"');

  s += `<path d="M7 10h10l-5 5z" fill="#fff"/>`;
  s += text(22, 17, "AUDNZD,Daily") + text(106, 17, "1.07033 1.07095 1.06387 1.06583");
  s += text(right - 24, 18, "Ravi + bvb with exit and baseline (3)", "", 'text-anchor="end"');
  s += `<g fill="none" stroke="#fff" shape-rendering="auto"><circle cx="${right - 12}" cy="14" r="6.500"/><path d="M${right - 15} 17.500q3-4 6 0M${right - 15} 12h2M${right - 11} 12h2"/></g>`;
  s += text(8, 263, "ATR(14) 0.0065");
  s += text(5, 237, "Spread", "big orange") + text(99, 237, "3.50", "big orange");
  s += text(153, 225, "max:3.70", "small red") + text(153, 233, "avg: 3.48", "small orange") + text(153, 241, "min:3.00", "small gold");
  s += text(214, 225, "Status", "small gray") + text(216, 239, "working", "mid aqua");

  box.innerHTML = `<svg width="${W}" height="${H}" shape-rendering="crispEdges">${s}</svg>`;
}

draw();
addEventListener("resize", draw);
```
